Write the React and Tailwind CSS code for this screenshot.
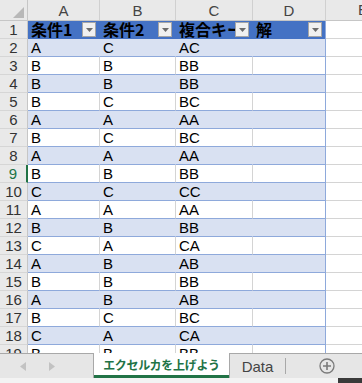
import React from "react";

const rows = [
  ["A", "C", "AC"],
  ["B", "B", "BB"],
  ["B", "B", "BB"],
  ["B", "C", "BC"],
  ["A", "A", "AA"],
  ["B", "C", "BC"],
  ["A", "A", "AA"],
  ["B", "B", "BB"],
  ["C", "C", "CC"],
  ["A", "A", "AA"],
  ["B", "B", "BB"],
  ["C", "A", "CA"],
  ["A", "B", "AB"],
  ["B", "B", "BB"],
  ["A", "B", "AB"],
  ["B", "C", "BC"],
  ["C", "A", "CA"],
  ["B", "B", "BB"],
];

const font = { fontFamily: '"Liberation Sans", "Noto Sans CJK JP", sans-serif' };
const cjk = { fontFamily: '"Noto Sans CJK JP", "Liberation Sans", sans-serif' };

function FilterBtn() {
  return (
    <div className="absolute right-[3px] top-[1px] w-[14px] h-[15px] bg-[#f0f0f0] border border-[#a6a6a6] flex items-center justify-center">
      <svg width="7" height="4" viewBox="0 0 7 4">
        <path d="M0 0 L7 0 L3.5 4 Z" fill="#6b6b6b" />
      </svg>
    </div>
  );
}

function HeaderCell({ w, text, last }) {
  return (
    <div
      className={`relative shrink-0 h-[18px] bg-[#4472c4] ${last ? "border-r border-[#8ea9db]" : "border-r border-[#4472c4]"} overflow-hidden`}
      style={{ width: w }}
    >
      <span
        className="absolute left-[3px] top-[-3px] text-[16px] font-bold text-black whitespace-nowrap leading-[22px]"
        style={cjk}
      >
        {text}
      </span>
      <FilterBtn />
    </div>
  );
}

export default function App() {
  const W = [28, 72, 76, 77, 73];
  return (
    <div className="w-[362px] h-[383px] overflow-hidden bg-white flex flex-col" style={font}>
      <div className="h-[353px] overflow-hidden flex flex-col">
        {/* column headers */}
        <div className="flex h-[21px] shrink-0 bg-[#e9e9e9] border-b border-[#c6c6c6]">
          <div className="relative shrink-0 border-r border-[#c6c6c6]" style={{ width: W[0] }}>
            <svg className="absolute right-[3px] bottom-[2px]" width="11" height="11" viewBox="0 0 11 11">
              <path d="M11 0 L11 11 L0 11 Z" fill="#b8b8b8" />
            </svg>
          </div>
          {["A", "B", "C", "D"].map((c, i) => (
            <div
              key={c}
              className="shrink-0 border-r border-[#d0d0d0] flex items-center justify-center text-[15px] text-[#444] leading-none"
              style={{ width: W[i + 1] }}
            >
              {c}
            </div>
          ))}
          <div className="flex-1 flex items-center pl-[32px] text-[15px] text-[#444] whitespace-nowrap overflow-hidden">E</div>
        </div>
        {/* row 1: table header */}
        <div className="flex h-[18px] shrink-0">
          <div
            className="shrink-0 bg-[#e9e9e9] border-r border-b border-[#c6c6c6] border-b-[#d6d6d6] flex items-center justify-center text-[15px] text-[#333] leading-none"
            style={{ width: W[0] }}
          >
            1
          </div>
          <HeaderCell w={W[1]} text="条件1" />
          <HeaderCell w={W[2]} text="条件2" />
          <HeaderCell w={W[3]} text="複合キー" />
          <HeaderCell w={W[4]} text="解" last />
          <div className="flex-1 border-b border-[#d6d6d6]" />
        </div>
        {rows.map((r, idx) => {
          const n = idx + 2;
          const band = n % 2 === 0;
          const sel = n === 9;
          return (
            <div key={n} className="flex h-[18px] shrink-0">
              <div
                className={`relative shrink-0 bg-[#e9e9e9] border-b border-[#d6d6d6] flex items-center justify-center text-[15px] leading-none ${sel ? "text-[#217346] border-r-2 border-r-[#217346]" : "text-[#333] border-r border-r-[#c6c6c6]"}`}
                style={{ width: W[0] }}
              >
                {n}
              </div>
              {r.map((v, j) => (
                <div
                  key={j}
                  className={`shrink-0 border-b border-[#8ea9db] flex items-center pl-[3px] text-[15px] text-black leading-none ${band ? "bg-[#d9e1f2]" : "bg-white"} ${band ? "border-r border-r-[#d9e1f2]" : "border-r border-r-[#d4d4d4]"}`}
                  style={{ width: W[j + 1] }}
                >
                  {v}
                </div>
              ))}
              <div
                className={`shrink-0 border-b border-[#8ea9db] border-r border-r-[#8ea9db] ${band ? "bg-[#d9e1f2]" : "bg-white"}`}
                style={{ width: W[4] }}
              />
              <div className="flex-1 border-b border-[#d4d4d4]" />
            </div>
          );
        })}
      </div>
      {/* sheet tab bar */}
      <div className="h-[25px] shrink-0 flex bg-[#e6e6e6]">
        <div className="w-[94px] shrink-0 border-t border-[#a8a8a8] border-r border-r-[#a8a8a8] flex items-center">
          <svg className="ml-[20px]" width="6" height="9" viewBox="0 0 6 9">
            <path d="M6 0 L6 9 L0 4.5 Z" fill="#c2c2c2" />
          </svg>
          <svg className="ml-[23px]" width="6" height="9" viewBox="0 0 6 9">
            <path d="M0 0 L0 9 L6 4.5 Z" fill="#c2c2c2" />
          </svg>
        </div>
        <div
          className="w-[135px] shrink-0 bg-white border-b-[3px] border-[#217346] flex items-center justify-center text-[12px] tracking-[-0.3px] text-[#217346] font-bold leading-none pt-[2px] whitespace-nowrap"
          style={cjk}
        >
          エクセルカを上げよう
        </div>
        <div className="flex-1 border-t border-[#a8a8a8] flex items-center">
          <div className="w-[56px] h-full border-l border-[#a8a8a8] flex items-center justify-center text-[15px] text-[#444] leading-none">
            Data
          </div>
          <div className="w-[1px] h-[16px] bg-[#a8a8a8]" />
          <div className="flex-1 flex items-center pl-[33px]">
            <svg width="16" height="16" viewBox="0 0 16 16">
              <circle cx="8" cy="8" r="7" fill="none" stroke="#7a7a7a" strokeWidth="1.3" />
              <path d="M8 4 V12 M4 8 H12" stroke="#7a7a7a" strokeWidth="1.6" />
            </svg>
          </div>
        </div>
      </div>
      <div className="flex-1 flex">
        <div className="w-[338px] bg-[#f3f3f3]" />
        <div className="flex-1 bg-[#3a3a3a]" />
      </div>
    </div>
  );
}
